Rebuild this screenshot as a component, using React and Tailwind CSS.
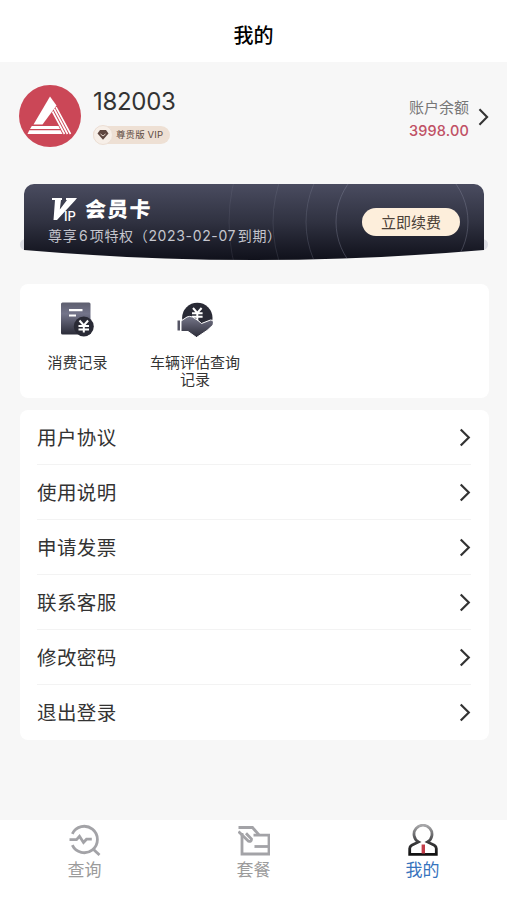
import React, { useState } from "react";

const menuItems = [
  "用户协议",
  "使用说明",
  "申请发票",
  "联系客服",
  "修改密码",
  "退出登录",
];

const Arrow = ({ className }) => (
  <svg
    className={className}
    viewBox="0 0 12 20"
    fill="none"
    stroke="currentColor"
    strokeWidth="2.3"
  >
    <path d="M1.5 1.5 10 10 1.5 18.5" />
  </svg>
);

const Logo = () => (
  <svg className="h-[62px] w-[62px]" viewBox="0 0 62 62">
    <circle cx="31" cy="31" r="31" fill="#cb4757" />
    <path d="M31 11.5 37.5 20.5 23.5 39.5H14.5Z" fill="#fff" />
    <path d="M12.8 41H39.5L41 44H11Z" fill="#fff" />
    <path d="M10.3 45.2H41.5L43.5 49H8.5Z" fill="#fff" />
    <path
      d="M33.5 26.5 45.5 49M35.2 24 48.5 49M37 22.2 51.5 49"
      stroke="#fff"
      strokeWidth="1.6"
    />
  </svg>
);

const Gem = () => (
  <svg className="h-[10px] w-[12px]" viewBox="0 0 12 10">
    <path d="M3 0H9L11.5 3.5 6 9.8.5 3.5Z" fill="#5f4740" />
    <path d="m3.5 4 2.5 2L8.5 4" fill="none" stroke="#f4e7dc" strokeWidth=".9" />
  </svg>
);

const BillIcon = () => (
  <svg className="h-9 w-9" viewBox="0 0 36 36">
    <defs>
      <linearGradient id="billBody" x1="0" y1="0" x2="0" y2="1">
        <stop offset="0" stopColor="#5d5e6e" />
        <stop offset="0.35" stopColor="#73748a" />
        <stop offset="1" stopColor="#2b2c38" />
      </linearGradient>
    </defs>
    <rect x="1" y="1.5" width="29.5" height="32" rx="1.5" fill="url(#billBody)" />
    <path d="M9 9.2H22.5M9 14.5H16" stroke="#fff" strokeWidth="2.2" />
    <circle cx="23.8" cy="25.5" r="10" fill="#292a35" />
    <path
      d="m19.5 19.5 4.3 5 4.3-5M18.5 25H29M18.5 28.4H29M23.8 24.5V31.5"
      fill="none"
      stroke="#fff"
      strokeWidth="2"
    />
  </svg>
);

const HandIcon = () => (
  <svg className="h-9 w-9" viewBox="0 0 36 36">
    <defs>
      <linearGradient id="hand" x1="0" y1="0" x2="0" y2="1">
        <stop offset="0" stopColor="#76778a" />
        <stop offset="1" stopColor="#2b2b37" />
      </linearGradient>
    </defs>
    <circle cx="20.3" cy="17" r="15.2" fill="#292a35" />
    <path
      d="m16 7 4.3 5 4.3-5M15 12.3H25.6M15 15.7H25.6M20.3 12V20"
      fill="none"
      stroke="#fff"
      strokeWidth="2"
    />
    <path
      d="M4 20 10 16Q12.5 14.8 15.5 16L21 19.5Q23.5 21.5 24.5 22.5L33.5 19Q37.5 19 36 24L30 29.5 19.5 36.5 11 30.5H4Z"
      fill="url(#hand)"
      stroke="#fff"
      strokeWidth="1"
    />
    <path d="M.5 19.5H3V29.5H.5Z" fill="#555565" />
  </svg>
);

const SearchIcon = () => (
  <svg
    className="h-8 w-8"
    viewBox="0 0 32 32"
    fill="none"
    stroke="#a3a3a7"
    strokeWidth="2.8"
  >
    <path d="M3.3 9.8A13.2 13.2 0 1 1 3.3 21.2" />
    <path d="M.5 15.6H7.5L10.5 12.2 14.5 18.5 17.5 15.2H22.8" />
    <path d="m24 25 6.5 6" />
  </svg>
);

const PackageIcon = () => (
  <svg
    className="h-8 w-8"
    viewBox="0 0 32 32"
    fill="none"
    stroke="#a3a3a7"
    strokeWidth="2.8"
  >
    <path d="M.5 3.5H14.5L21 11" />
    <path d="M4 9V30H31V11.2H15.5" />
    <path d="M.5 7.5 10.5 17.2Q13.5 18 13.5 15L8 9.2" />
    <path d="M16.5 22.5H31" />
  </svg>
);

const MineIcon = () => (
  <svg className="h-8 w-8" viewBox="0 0 32 32" fill="none">
    <defs>
      <linearGradient id="mine" x1="0" y1="0" x2="0" y2="1">
        <stop offset="0" stopColor="#a8a8aa" />
        <stop offset="0.6" stopColor="#3b3b3d" />
        <stop offset="1" stopColor="#111" />
      </linearGradient>
    </defs>
    <path
      d="M11.5 18A9 9 0 1 1 20.5 18L27.3 21.3Q29.3 22.5 29.3 24.5V30.3H2.7V24.5Q2.7 22.5 4.7 21.3Z"
      stroke="url(#mine)"
      strokeWidth="2.8"
    />
    <path d="M16.3 20.5V29.5" stroke="#c23c48" strokeWidth="3.4" />
  </svg>
);

const tabs = [
  { name: "查询", icon: <SearchIcon /> },
  { name: "套餐", icon: <PackageIcon /> },
  { name: "我的", icon: <MineIcon /> },
];

const App = () => {
  const [active, setActive] = useState("我的");

  return (
    <div className="flex h-[900px] w-full flex-col bg-[#f7f7f7] font-['Inter','Noto_Sans_CJK_SC',sans-serif] text-[#333]">
      <header className="flex h-[62px] shrink-0 items-center justify-center bg-white pt-[10px]">
        <h1 className="text-[20px] font-medium text-black">我的</h1>
      </header>

      <main className="flex flex-1 flex-col">
        <section className="flex h-[122px] items-start pt-[23px] pr-[18px] pl-[19px]">
          <Logo />
          <div className="ml-3 flex flex-col items-start">
            <p className="mt-[2px] text-[24px] leading-[30px] tracking-[-0.3px] text-[#333]">
              182003
            </p>
            <div className="mt-[9px] flex h-[18px] items-center rounded-full bg-[#eee0d4] pr-[7px]">
              <span className="flex h-5 w-5 items-center justify-center rounded-full border border-[#ecdfd5] bg-[#f7efe8]">
                <Gem />
              </span>
              <span className="ml-[3px] text-[9.5px] leading-none tracking-[0.1px] text-[#5f4c43]">
                尊贵版 VIP
              </span>
            </div>
          </div>
          <div className="mt-[11px] ml-auto flex items-center gap-[9px]">
            <div className="text-right">
              <p className="text-[15px] leading-[24px] text-[#777]">账户余额</p>
              <p className="text-[14.5px] leading-[22px] font-medium tracking-[0.15px] text-[#c05064]">
                3998.00
              </p>
            </div>
            <Arrow className="mb-1 h-[18px] w-[11px]" />
          </div>
        </section>

        <section className="relative mr-[19px] ml-5 h-[76px]">
          <div className="absolute top-[55px] right-0 left-0 h-[11px] rounded-full bg-[#dcdde4]"></div>
          <div className="relative mx-1 flex h-[76px] items-start justify-between overflow-hidden rounded-t-[10px] bg-linear-to-b from-[#4a4c60] via-[#303241] to-[#10111b] pr-6 pl-6 [clip-path:path('M0_0H460V66Q230_86_0_66Z')]">
            <svg
              className="absolute top-0 left-0 h-[76px] w-[460px]"
              viewBox="0 0 460 76"
              fill="none"
              stroke="#8d8fa3"
              strokeOpacity="0.35"
            >
              <circle cx="378" cy="38" r="66" />
              <circle cx="378" cy="38" r="96" strokeOpacity="0.25" />
              <circle cx="378" cy="38" r="129" strokeOpacity="0.18" />
              <circle cx="378" cy="38" r="173" strokeOpacity="0.15" />
            </svg>
            <div className="relative pt-[11px]">
              <div className="flex h-[29px] items-center text-white">
                <span className="flex w-[37px] items-end">
                  <svg className="h-[23px] w-[29px] shrink-0" viewBox="0 0 29 23">
                    <path
                      d="M4 0H14V2H13L11.8 11.5 19 2H18V0H29L27 2.5 9 22H5.5L7 2H4Z"
                      fill="#fff"
                    />
                  </svg>
                  <span className="-ml-[13px] text-[13px] leading-[10px] font-medium">
                    IP
                  </span>
                </span>
                <span className="-skew-x-3 text-[21px] leading-none font-black tracking-[1.2px]">
                  会员卡
                </span>
              </div>
              <p className="text-[14px] leading-6 tracking-[0.65px] [word-spacing:-3px] whitespace-nowrap text-[#c5c6ce]">
                尊享 6 项特权（2023-02-07 到期）
              </p>
            </div>
            <button className="relative mt-6 h-[28px] w-[98px] rounded-full bg-[#fdeedb] text-[15px] leading-none text-[#4b4037]">
              立即续费
            </button>
          </div>
        </section>

        <section className="mr-[18px] ml-5 mt-6 flex h-[114px] rounded-lg bg-white pt-[17px]">
          <div className="flex w-[115px] flex-col items-center">
            <BillIcon />
            <p className="mt-[17px] text-[15px] leading-[17px]">消费记录</p>
          </div>
          <div className="flex w-[120px] flex-col items-center">
            <HandIcon />
            <p className="mt-[17px] w-[92px] text-center text-[15px] leading-[17px]">
              车辆评估查询记录
            </p>
          </div>
        </section>

        <section className="mr-[18px] ml-5 mt-3 rounded-lg bg-white pr-[18px] pl-[17px]">
          {menuItems.map((item) => (
            <div
              key={item}
              className="flex h-[55px] items-center justify-between border-b border-[#f3f3f3] last:border-transparent"
            >
              <span className="pt-1 text-[19.5px] tracking-[0.4px]">{item}</span>
              <Arrow className="mt-px h-[19px] w-[12px]" />
            </div>
          ))}
        </section>
      </main>

      <nav className="grid h-[80px] shrink-0 grid-cols-3 bg-white">
        {tabs.map((tab) => (
          <button
            key={tab.name}
            onClick={() => setActive(tab.name)}
            className="flex flex-col items-center pt-1"
          >
            {tab.icon}
            <span
              className={
                active === tab.name
                  ? "mt-px text-[17px] leading-[26px] text-[#3773bd]"
                  : "mt-px text-[17px] leading-[26px] text-[#9b9b9b]"
              }
            >
              {tab.name}
            </span>
          </button>
        ))}
      </nav>
    </div>
  );
};

export default App;
